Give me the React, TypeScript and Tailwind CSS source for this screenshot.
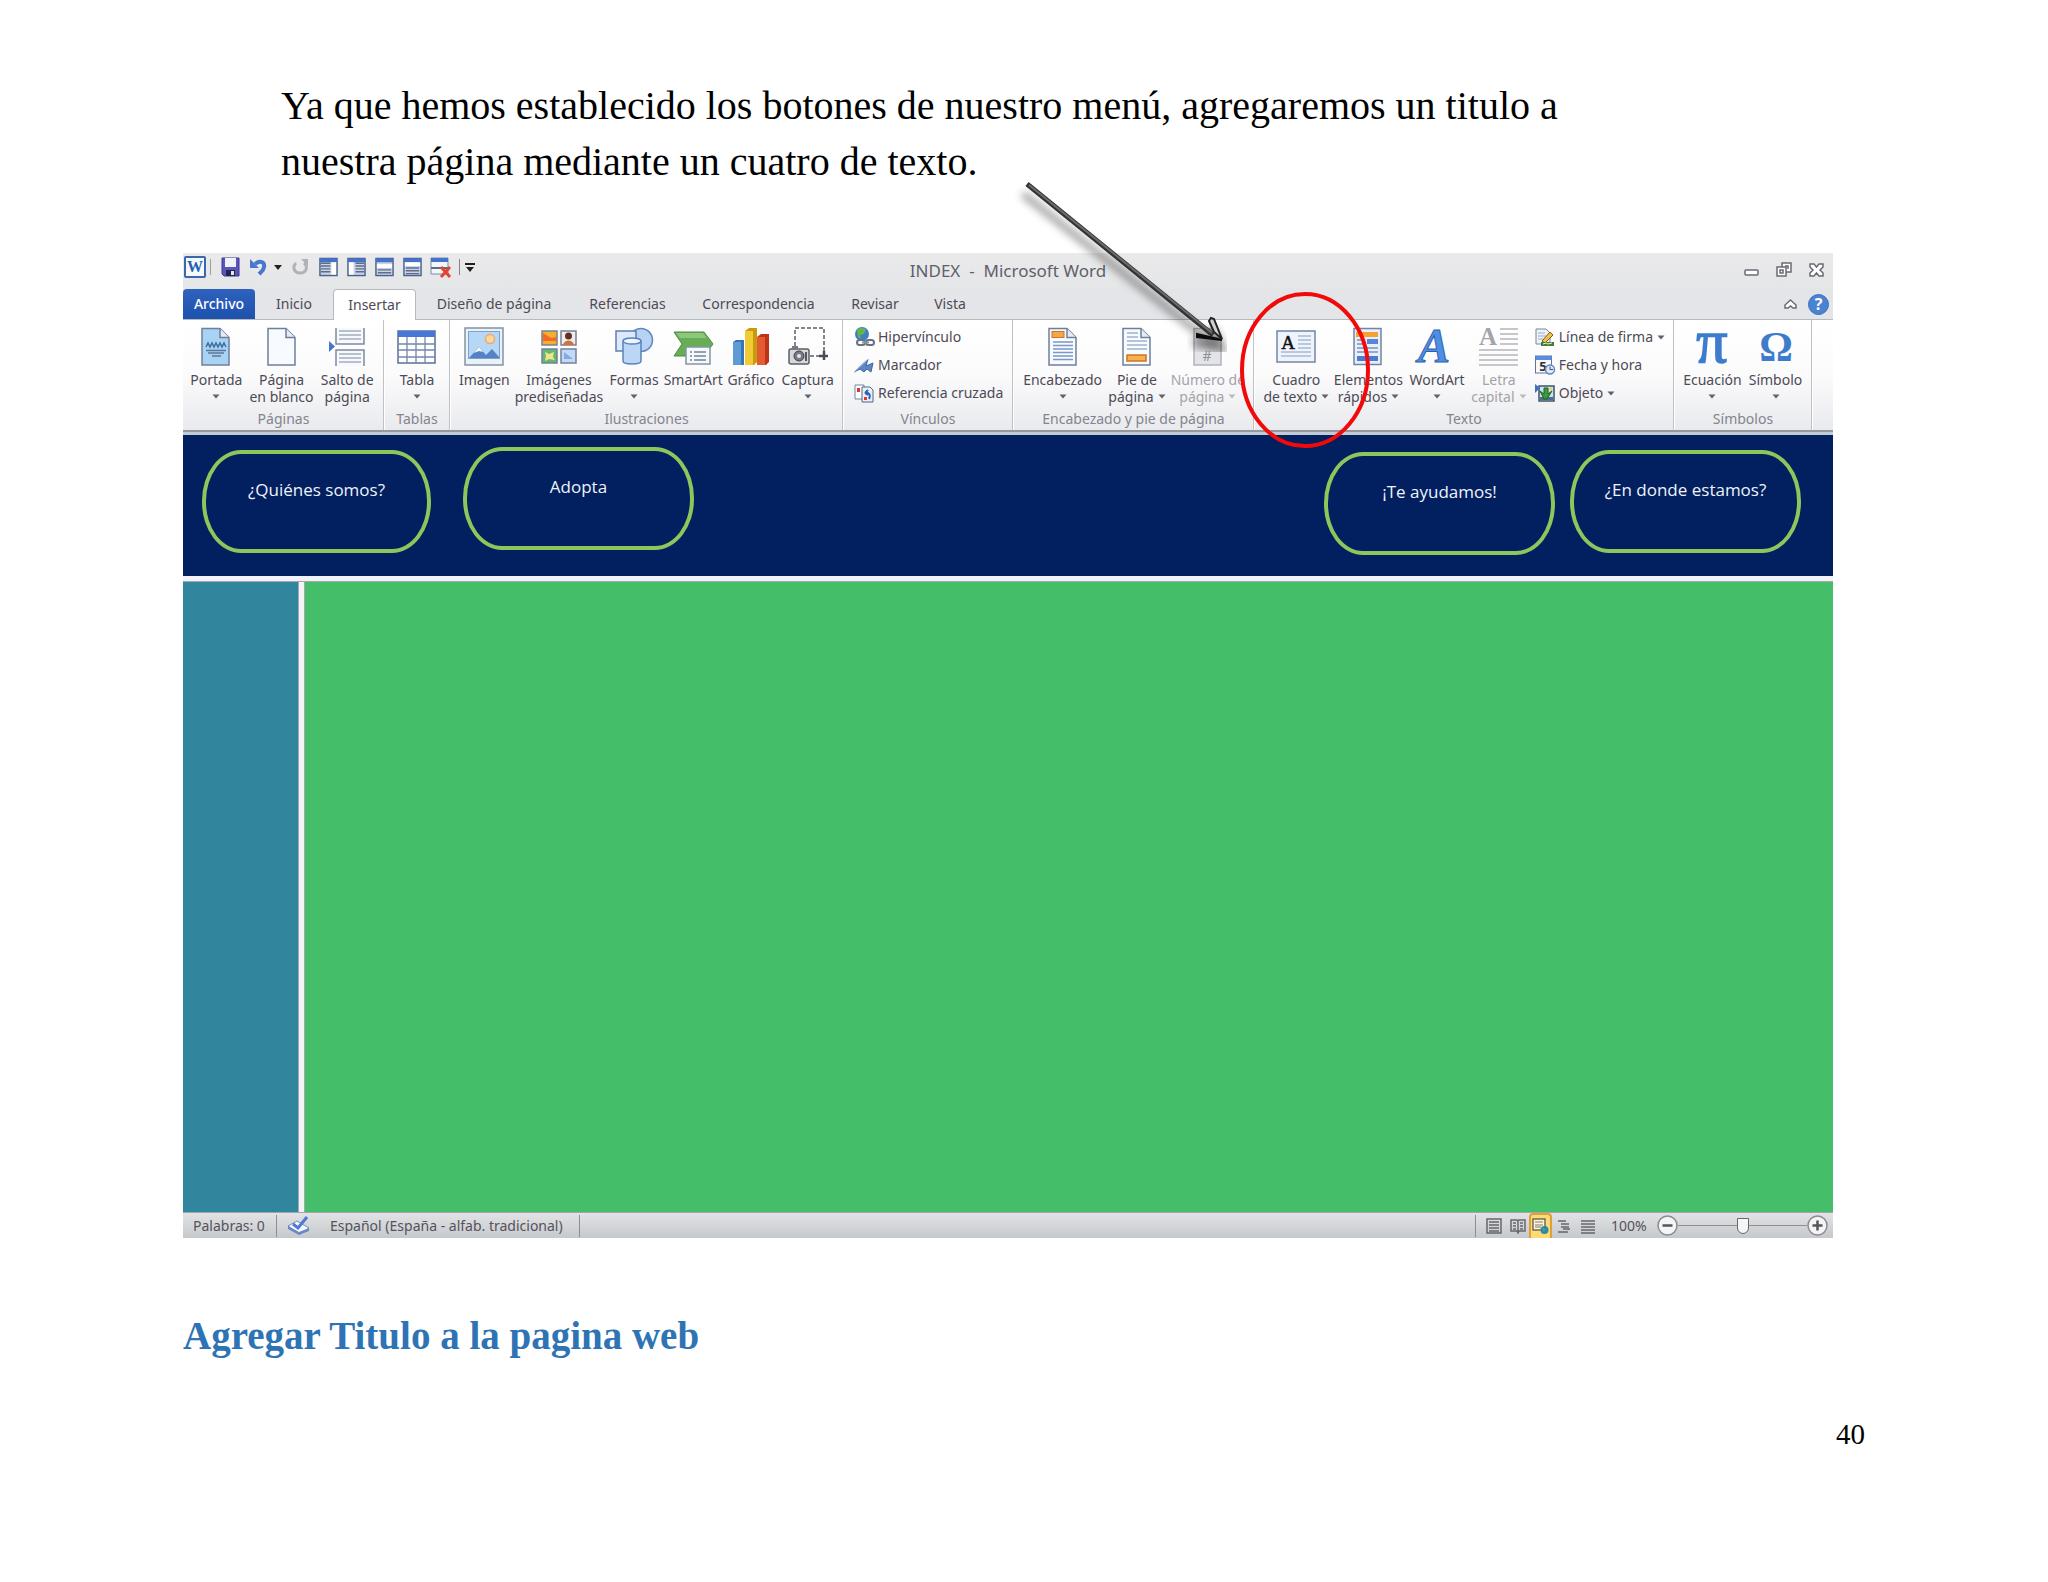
import type { ReactNode } from "react";
import { clsx } from "clsx";

const uiFont = "font-['Noto_Sans','Open_Sans',sans-serif]";
const serifFont = "font-['Liberation_Serif',serif]";

function Caret({ light }: { light?: boolean }) {
  return (
    <svg width="8" height="5" viewBox="0 0 8 5" className="inline-block shrink-0">
      <path d="M0.5 0.5h7L4 4.5z" fill={light ? "#b9bac0" : "#606168"} />
    </svg>
  );
}

/* ---------- large ribbon icons, 40x40 ---------- */

function Icon({ children }: { children: ReactNode }) {
  return (
    <svg width="40" height="40" viewBox="0 0 40 40" fill="none" className="shrink-0 overflow-visible">
      {children}
    </svg>
  );
}

function Sheet({ fill = "#f7fafe", stroke = "#6f7f9a" }: { fill?: string; stroke?: string }) {
  return (
    <>
      <path d="M6 1.5h18l9 9V38H6z" fill={fill} stroke={stroke} strokeWidth="1.5" />
      <path d="M24 1.5v9h9" fill="#e3ebf6" stroke={stroke} strokeWidth="1.5" />
    </>
  );
}

const CoverIcon = () => (
  <Icon>
    <Sheet fill="#a9d3f5" />
    <path d="M10 20l2-4 2 4 2-4 2 4 2-4 2 4 2-4 2 4 2-4 2 4" stroke="#3d6ea0" strokeWidth="1.5" />
    <path d="M10 23.500h20M12 26h16M16 29h9" stroke="#5a7896" strokeWidth="1.500" />
  </Icon>
);

const BlankIcon = () => (
  <Icon>
    <Sheet />
  </Icon>
);

const BreakIcon = () => (
  <Icon>
    <path d="M9 1v16h28V1M9 39V23h28v16" fill="#f7f9fd" stroke="#7c89a3" strokeWidth="1.500" />
    <path d="M12 4h22M12 8h22M12 12h22M12 27h22M12 31h22M12 35h22" stroke="#a3adbf" strokeWidth="1.500" />
    <path d="M2 14l6 5.500L2 25z" fill="#4775cf" />
  </Icon>
);

const TableIcon = () => (
  <Icon>
    <rect x="1" y="4" width="37" height="32" fill="#fff" stroke="#5c6f92" strokeWidth="1.500" />
    <rect x="1" y="4" width="37" height="6" fill="#4677d8" />
    <path d="M10 10v26M19 10v26M28 10v26M1 17h37M1 23h37M1 30h37" stroke="#7487ac" strokeWidth="1.300" />
  </Icon>
);

const PictureIcon = () => (
  <Icon>
    <rect x="1" y="1" width="38" height="37" fill="#e9f2f7" stroke="#8593a3" strokeWidth="1.500" />
    <rect x="4.500" y="4.500" width="31" height="27" fill="#b6d8f6" stroke="#7aa2cd" />
    <circle cx="26" cy="12" r="4.500" fill="#fdd9a0" stroke="#f0a868" strokeWidth="1.500" />
    <path d="M5 31l10-11 7 8 6-6 7 8v1z" fill="#5582c4" />
    <path d="M10 26l5-6 4 5-4-1z" fill="#f3f8ff" />
  </Icon>
);

const ClipArtIcon = () => (
  <Icon>
    <g strokeWidth="1.500" stroke="#75819a">
      <rect x="3" y="4" width="15" height="14" fill="#f5b028" />
      <rect x="22" y="4" width="15" height="14" fill="#f3ece6" />
      <rect x="3" y="22" width="15" height="14" fill="#66b96c" />
      <rect x="22" y="22" width="15" height="14" fill="#c3daf7" />
    </g>
    <path d="M4 6l8 5 5-1v4H4z" fill="#f26a2a" />
    <circle cx="29.500" cy="9" r="3.500" fill="#5b3424" />
    <path d="M24 18c1-6 10-6 11 0z" fill="#d6703a" />
    <path d="M6 25l4 2 5-2-1 5 2 3-6-1-4 2 1-5z" fill="#f0e58c" />
    <path d="M25 25l9 7H25z" fill="#86a8e8" />
  </Icon>
);

const ShapesIcon = () => (
  <Icon>
    <circle cx="27" cy="13" r="11.500" fill="#b7d2f3" stroke="#5f86bf" strokeWidth="1.500" />
    <rect x="2" y="4" width="20" height="20" fill="#dce9fa" stroke="#5f7fae" strokeWidth="1.500" />
    <path d="M9 14v20c0 4 18 4 18 0V14" fill="#bcd6f6" stroke="#5b82bd" strokeWidth="1.500" />
    <ellipse cx="18" cy="14" rx="9" ry="3" fill="#edf4fd" stroke="#5b82bd" strokeWidth="1.500" />
  </Icon>
);

const SmartArtIcon = () => (
  <Icon>
    <path d="M1 5h30l9 12-9 12H1l8-12z" fill="#67ad56" stroke="#4b8b40" />
    <path d="M3 6h27l4 5H7z" fill="#8cc77c" />
    <rect x="13" y="20" width="24" height="17" fill="#f6f9fb" stroke="#8594a0" strokeWidth="1.500" />
    <path d="M17 25h2M17 29h2M17 33h2M21 25h12M21 29h12M21 33h12" stroke="#70829a" strokeWidth="1.500" />
  </Icon>
);

const ChartIcon = () => (
  <Icon>
    <path d="M2 15l3-2h8v25H2z" fill="#3575b8" />
    <path d="M2 15h8v23H2z" fill="#5c9bd6" />
    <path d="M26 10l4-3h8v28l-3 3h-9z" fill="#bd3418" />
    <path d="M26 10h8v28h-8z" fill="#e35a35" />
    <path d="M14 4l4-3h8v34l-3 3h-9z" fill="#c99a0c" />
    <path d="M14 4h8v34h-8z" fill="#f1cb35" />
  </Icon>
);

const CaptureIcon = () => (
  <Icon>
    <path d="M7 19V1h29v27M22 29h14" stroke="#5c5f68" strokeWidth="1.500" strokeDasharray="4 2" />
    <path d="M36 24v9M31 29h9" stroke="#4a4c55" strokeWidth="2.500" />
    <rect x="1" y="22" width="20" height="15" rx="2" fill="#d5d7da" stroke="#5c5f66" strokeWidth="1.500" />
    <rect x="4" y="19" width="6" height="3" fill="#777a80" />
    <circle cx="11" cy="29" r="5" fill="#777b83" stroke="#3e4046" />
    <circle cx="11" cy="29" r="2" fill="#e2e4e8" />
    <path d="M18 25v9" stroke="#55585f" strokeWidth="2" />
  </Icon>
);

const HeaderIcon = () => (
  <Icon>
    <Sheet />
    <rect x="9" y="4.500" width="12" height="6" fill="#f3a64a" stroke="#cf7422" />
    <path d="M10 15h20M10 18.500h20M10 22h20M10 25.500h20M10 29h20M10 32.500h20" stroke="#7c98c4" strokeWidth="1.500" />
  </Icon>
);

const FooterIcon = () => (
  <Icon>
    <Sheet />
    <path d="M10 6h11M10 10h11M10 14h20M10 18h20M10 22h20" stroke="#9db1d0" strokeWidth="1.500" />
    <rect x="10" y="28" width="19" height="6" fill="#f5b14e" stroke="#cf7422" strokeWidth="1.500" />
  </Icon>
);

const PageNumberIcon = () => (
  <Icon>
    <Sheet fill="#e3e4e7" stroke="#b0b2b8" />
    <text x="19" y="34" textAnchor="middle" fontSize="14" fill="#8e9097" fontFamily="Noto Sans">
      #
    </text>
  </Icon>
);

const TextBoxIcon = () => (
  <Icon>
    <rect x="1" y="4" width="38" height="31" fill="#eff4fc" stroke="#7385a3" strokeWidth="1.500" />
    <path d="M22 9h13M22 13h13M22 17h13M22 21h13M5 25h30M5 29h30" stroke="#a9b9d4" strokeWidth="1.500" />
    <text x="12" y="22" textAnchor="middle" fontSize="19" fill="#111" stroke="#111" strokeWidth=".5" fontFamily="Liberation Serif">
      A
    </text>
  </Icon>
);

const QuickPartsIcon = () => (
  <Icon>
    <rect x="6" y="1.500" width="27" height="36" fill="#e8effa" stroke="#7385a3" strokeWidth="1.500" />
    <rect x="8" y="5" width="22" height="5" fill="#f5a233" />
    <rect x="19" y="12" width="11" height="5" fill="#5687d6" />
    <path d="M9 13h8M9 17h8M9 21h21M9 25h21" stroke="#7893c0" strokeWidth="1.500" />
    <rect x="9" y="29" width="21" height="5" fill="#4a7cd4" />
  </Icon>
);

const WordArtIcon = () => (
  <Icon>
    <text
      x="17"
      y="35"
      textAnchor="middle"
      fontSize="48"
      fontStyle="italic"
      fontWeight="bold"
      fill="#4e8fe4"
      stroke="#2f60ae"
      fontFamily="Liberation Serif"
    >
      A
    </text>
  </Icon>
);

const DropCapIcon = () => (
  <Icon>
    <text x="9" y="18" textAnchor="middle" fontSize="25" fontWeight="bold" fill="#a3a5aa" fontFamily="Liberation Serif">
      A
    </text>
    <path d="M21 2h18M21 7h18M21 12h18M21 17h18M0 23h39M0 28h39M0 33h39M0 38h39" stroke="#b3b5ba" strokeWidth="1.500" />
  </Icon>
);

const PiIcon = () => (
  <Icon>
    <text
      x="20"
      y="35"
      textAnchor="middle"
      fontSize="62"
      fill="#3d7ccd"
      stroke="#3d7ccd"
      strokeWidth="1.5"
      fontFamily="Liberation Serif"
    >
      π
    </text>
  </Icon>
);

const OmegaIcon = () => (
  <Icon>
    <text x="20" y="34" textAnchor="middle" fontSize="42" fontWeight="bold" fill="#3d7ccd" fontFamily="Liberation Serif">
      Ω
    </text>
  </Icon>
);

/* ---------- small ribbon icons, 20x20 ---------- */

function SmallIcon({ children }: { children: ReactNode }) {
  return (
    <svg width="20" height="20" viewBox="0 0 20 20" fill="none" className="shrink-0 overflow-visible">
      {children}
    </svg>
  );
}

const LinkIcon = () => (
  <SmallIcon>
    <circle cx="8" cy="7" r="7" fill="#3f7dc4" />
    <path d="M3 3c3-3 6-2 9-1l-2 5-4 1 1 4-3-2z" fill="#63b54e" />
    <rect x="3" y="13" width="8" height="5" rx="2.500" stroke="#66727f" strokeWidth="2" />
    <rect x="12" y="13" width="8" height="5" rx="2.500" stroke="#66727f" strokeWidth="2" />
    <path d="M8 15.500h7" stroke="#8b96a2" strokeWidth="2" />
  </SmallIcon>
);

const BookmarkIcon = () => (
  <SmallIcon>
    <path d="M0 17L14 4l-2 7 7-3-2 9-4-3-3 3-4-3z" fill="#5b86c8" stroke="#41659f" />
    <path d="M0 17L14 4" stroke="#c6d8f2" />
  </SmallIcon>
);

const CrossRefIcon = () => (
  <SmallIcon>
    <path d="M1 2h9v14H1z" fill="#fff" stroke="#7485a1" />
    <path d="M8 4h8l3 3v12H8z" fill="#e9f0fa" stroke="#52658a" />
    <path d="M3 5h3v4H3z" fill="#d93b2a" />
    <path d="M15 16c2-4 0-7-4-6m0 0l3-3m-3 3l3 2" stroke="#2d63b8" strokeWidth="2" />
    <path d="M10 14h3v3h-3z" fill="#d93b2a" />
  </SmallIcon>
);

const SignatureIcon = () => (
  <SmallIcon>
    <path d="M1 2h10l4 4v11H1z" fill="#eef3fa" stroke="#7485a1" />
    <path d="M3 6h7M3 9h8M3 12h5" stroke="#9aacca" />
    <path d="M7 14l8-9 3 3-8 8z" fill="#f0c14a" stroke="#7c5d1a" />
    <path d="M6 15h13v4H6z" fill="#4b7a34" />
    <path d="M8 17l3-1 2 1 4-1" stroke="#e9f3d0" />
  </SmallIcon>
);

const DateIcon = () => (
  <SmallIcon>
    <rect x="0.500" y="1" width="16" height="17" fill="#f7f9fc" stroke="#5d74a0" />
    <path d="M0.500 1h16v4h-16z" fill="#5b8be0" />
    <text x="8" y="16" textAnchor="middle" fontSize="13" fontWeight="bold" fill="#333" fontFamily="Noto Sans">
      5
    </text>
    <circle cx="15" cy="14.500" r="4.500" fill="#dce8f8" stroke="#6487bd" strokeWidth="1.500" />
    <path d="M15 11.500v3h3" stroke="#456" />
  </SmallIcon>
);

const ObjectIcon = () => (
  <SmallIcon>
    <rect x="4" y="3" width="15" height="15" fill="#cfe2ee" stroke="#3d556d" strokeWidth="1.500" />
    <path d="M5 14h13v3H5z" fill="#4a6f92" />
    <path d="M5 8l4 3V5h4v6l4-3-5 8H9z" fill="#3f9a3a" stroke="#1f5f22" />
    <circle cx="16" cy="6" r="1.500" fill="#f3d44f" />
    <path d="M0 1l5 4-5 5z" fill="#3e6fc0" />
  </SmallIcon>
);

/* ---------- ribbon ---------- */

type BigButtonProps = {
  icon: ReactNode;
  label: string;
  second?: string;
  caret?: boolean;
  disabled?: boolean;
};

function BigButton({ icon, label, second, caret, disabled }: BigButtonProps) {
  return (
    <button
      type="button"
      disabled={disabled}
      className={clsx(
        "flex min-w-0 flex-col items-center whitespace-nowrap text-sm leading-[17px]",
        disabled ? "text-[#a2a3a9]" : "text-[#4d4a55]"
      )}
    >
      {icon}
      <span className="mt-1">{label}</span>
      <span className="flex h-[17px] items-center gap-1">
        {second}
        {caret && <Caret light={disabled} />}
      </span>
    </button>
  );
}

function SmallButton({ icon, label, caret }: { icon: ReactNode; label: string; caret?: boolean }) {
  return (
    <button type="button" className="flex h-7 items-center gap-1 whitespace-nowrap text-sm text-[#4d4a55]">
      {icon}
      {label}
      {caret && <Caret />}
    </button>
  );
}

function Group({ title, cols, children }: { title: string; cols: string; children: ReactNode }) {
  return (
    <section
      aria-label={title}
      className="flex min-w-0 flex-col border-r border-[#bfc1c6] shadow-[1px_0_0_#fff]"
    >
      <div className={clsx("grid h-[86px] pt-[7px] pl-px", cols)}>{children}</div>
      <h3 className="mt-[3px] mb-px pl-px whitespace-nowrap text-center text-sm leading-5 text-[#83848d]">{title}</h3>
    </section>
  );
}

function Ribbon() {
  return (
    <div className="grid grid-cols-[201fr_66fr_393fr_170fr_241fr_420fr_138fr_21fr] border-t border-[#b6b9be] bg-linear-to-b from-white via-[#fbfbfc] to-[#e9eaee]">
      <Group title="Páginas" cols="grid-cols-[65fr_66fr_66fr_3fr]">
        <BigButton icon={<CoverIcon />} label="Portada" caret />
        <BigButton icon={<BlankIcon />} label="Página" second="en blanco" />
        <BigButton icon={<BreakIcon />} label="Salto de" second="página" />
      </Group>
      <Group title="Tablas" cols="grid-cols-1">
        <BigButton icon={<TableIcon />} label="Tabla" caret />
      </Group>
      <Group title="Ilustraciones" cols="grid-cols-[67fr_83fr_68fr_51fr_65fr_49fr_10fr]">
        <BigButton icon={<PictureIcon />} label="Imagen" />
        <BigButton icon={<ClipArtIcon />} label="Imágenes" second="prediseñadas" />
        <BigButton icon={<ShapesIcon />} label="Formas" caret />
        <BigButton icon={<SmartArtIcon />} label="SmartArt" />
        <BigButton icon={<ChartIcon />} label="Gráfico" />
        <BigButton icon={<CaptureIcon />} label="Captura" caret />
      </Group>
      <Group title="Vínculos" cols="grid-cols-1">
        <div className="-mt-1 flex flex-col pl-[10px]">
          <SmallButton icon={<LinkIcon />} label="Hipervínculo" />
          <SmallButton icon={<BookmarkIcon />} label="Marcador" />
          <SmallButton icon={<CrossRefIcon />} label="Referencia cruzada" />
        </div>
      </Group>
      <Group title="Encabezado y pie de página" cols="grid-cols-[98fr_52fr_91fr]">
        <BigButton icon={<HeaderIcon />} label="Encabezado" caret />
        <BigButton icon={<FooterIcon />} label="Pie de" second="página" caret />
        <BigButton icon={<PageNumberIcon />} label="Número de" second="página" caret disabled />
      </Group>
      <Group title="Texto" cols="grid-cols-[83fr_62fr_76fr_48fr_151fr]">
        <BigButton icon={<TextBoxIcon />} label="Cuadro" second="de texto" caret />
        <BigButton icon={<QuickPartsIcon />} label="Elementos" second="rápidos" caret />
        <BigButton icon={<WordArtIcon />} label="WordArt" caret />
        <BigButton icon={<DropCapIcon />} label="Letra" second="capital" caret disabled />
        <div className="-mt-1 flex min-w-0 flex-col pl-3">
          <SmallButton icon={<SignatureIcon />} label="Línea de firma" caret />
          <SmallButton icon={<DateIcon />} label="Fecha y hora" />
          <SmallButton icon={<ObjectIcon />} label="Objeto" caret />
        </div>
      </Group>
      <Group title="Símbolos" cols="grid-cols-[76fr_52fr_10fr]">
        <BigButton icon={<PiIcon />} label="Ecuación" caret />
        <BigButton icon={<OmegaIcon />} label="Símbolo" caret />
      </Group>
    </div>
  );
}

/* ---------- title bar and tabs ---------- */

const layoutIcons = [
  "M2 6h10M2 9h10M2 12h10M2 15h10",
  "M9 6h9M9 9h9M9 12h9M9 15h9",
  "M3 13h14M3 16h14",
  "M3 11h14M3 14h14M3 17h14",
];

function LayoutIcon({ index }: { index: number }) {
  return (
    <svg width="19" height="20" viewBox="0 0 20 20" fill="none">
      <rect x="1" y="1" width="18" height="18" fill="#c9d3e4" stroke="#4a6190" strokeWidth="1.500" />
      <path d="M1 1h18v4H1z" fill="#4573cc" />
      {index === 0 && <path d="M13 5h5v13h-5z" fill="#fff" />}
      {index === 1 && <path d="M2 5h5v13H2z" fill="#fff" />}
      {index === 2 && <path d="M2 7h16v4H2z" fill="#fff" />}
      {index === 3 && <path d="M2 5h16v4H2z" fill="#fff" />}
      <path d={layoutIcons[index]} stroke="#5e6c86" strokeWidth="1.500" />
    </svg>
  );
}

function QuickAccess() {
  return (
    <div className="flex items-center">
      <svg width="22" height="22" viewBox="0 0 22 22" className="ml-px">
        <rect x="1" y="1" width="20" height="20" rx="1" fill="#f5f9fe" stroke="#3a68ae" strokeWidth="2" />
        <text x="11" y="16" textAnchor="middle" fontSize="16" fontWeight="bold" fill="#2460b2" fontFamily="Liberation Serif">
          W
        </text>
      </svg>
      <span className="ml-1 h-4 w-px bg-[#9b9ca2]" />
      <button type="button" aria-label="Guardar" className="ml-[10px]">
        <svg width="19" height="20" viewBox="0 0 19 20">
          <path d="M1 1h17v18H3l-2-2z" fill="#5a55b8" stroke="#3a3890" />
          <path d="M4 1h11v9H4z" fill="#eef2fb" />
          <path d="M5 13h9v6H5z" fill="#24244f" />
          <path d="M10 14h3v4h-3z" fill="#e8e8f2" />
        </svg>
      </button>
      <button type="button" aria-label="Deshacer" className="ml-[10px]">
        <svg width="17" height="18" viewBox="0 0 17 18" fill="none">
          <path d="M5 6c5-4 10-2 9 3-.5 4-3 5-5 7" stroke="#4877cf" strokeWidth="4" />
          <path d="M0 1v9h9z" fill="#4877cf" />
        </svg>
      </button>
      <span className="ml-[7px] flex">
        <svg width="8" height="5" viewBox="0 0 8 5">
          <path d="M0 0h8L4 5z" fill="#222" />
        </svg>
      </span>
      <button type="button" aria-label="Rehacer" className="ml-[10px]">
        <svg width="17" height="18" viewBox="0 0 17 18" fill="none">
          <path d="M4 5c-4 4-2 10 4 10 7 0 8-7 4-10" stroke="#b1b2b6" strokeWidth="3" />
          <path d="M9 1h7v7z" fill="#b1b2b6" />
        </svg>
      </button>
      <div className="ml-[10px] flex gap-[9px]">
        {layoutIcons.map((d, i) => (
          <button key={d} type="button" aria-label={`Diseño ${i + 1}`}>
            <LayoutIcon index={i} />
          </button>
        ))}
      </div>
      <button type="button" aria-label="Quitar" className="ml-2">
        <svg width="22" height="21" viewBox="0 0 22 21" fill="none">
          <path d="M1 1h17v16H1z" fill="#f2f5fa" stroke="#7b8cab" />
          <path d="M1 1h17v4H1z" fill="#4573cc" />
          <path d="M1 11h17" stroke="#5e6c86" strokeWidth="2" />
          <path d="M11 10l9 10M20 10l-9 10" stroke="#e2452f" strokeWidth="3" />
        </svg>
      </button>
      <span className="ml-[7px] h-4 w-px bg-[#85868c]" />
      <svg width="10" height="9" viewBox="0 0 10 9" className="ml-[5px]">
        <path d="M0 0h10v2H0zM1 4h8L5 9z" fill="#222" />
      </svg>
    </div>
  );
}

function TitleBar() {
  return (
    <header className="grid h-9 grid-cols-[1fr_auto_1fr] bg-linear-to-b from-[#eaeaeb] to-[#e5e6e8]">
      <div className="flex items-start pt-[3px]">
        <QuickAccess />
      </div>
      <h2 className="whitespace-pre pt-[6px] text-[17px] leading-6 text-[#5f5f69]">INDEX  -  Microsoft Word</h2>
      <div className="flex items-center justify-end gap-[17px] pr-[9px] pb-[3px]">
        <button type="button" aria-label="Minimizar">
          <svg width="15" height="16" viewBox="0 0 15 16" fill="none">
            <rect x="1" y="8" width="13" height="5" rx="1" fill="#fff" stroke="#6a6b72" strokeWidth="1.500" />
          </svg>
        </button>
        <button type="button" aria-label="Restaurar">
          <svg width="16" height="16" viewBox="0 0 16 16" fill="none" stroke="#6a6b72" strokeWidth="1.500">
            <rect x="6" y="1" width="9" height="9" fill="#fff" />
            <rect x="1" y="5" width="9" height="9" fill="#fff" />
            <path d="M4 8h3v3H4zM9 4h3v3" />
          </svg>
        </button>
        <button type="button" aria-label="Cerrar">
          <svg width="15" height="14" viewBox="0 0 15 14">
            <path
              d="M1 1h4l2.500 3L10 1h4v3l-3 3 3 3v3h-4l-2.500-3L5 13H1v-3l3-3-3-3z"
              fill="#fff"
              stroke="#6a6b72"
              strokeWidth="1.500"
            />
          </svg>
        </button>
      </div>
    </header>
  );
}

const tabs = [
  { label: "Inicio", width: "w-[78px]" },
  { label: "Insertar", width: "w-[83px]", active: true },
  { label: "Diseño de página", width: "w-[156px]" },
  { label: "Referencias", width: "w-[111px]" },
  { label: "Correspondencia", width: "w-[151px]" },
  { label: "Revisar", width: "w-[82px]" },
  { label: "Vista", width: "w-[68px]" },
];

function Tabs() {
  return (
    <div className="flex h-[30px] items-stretch bg-[#e4e5e8] text-sm text-[#4d4a55]">
      <button type="button" className="w-[72px] rounded-t bg-linear-to-b from-[#2e62bd] to-[#1d51ae] font-medium text-white">
        Archivo
      </button>
      {tabs.map((tab) => (
        <button
          key={tab.label}
          type="button"
          className={clsx(
            "whitespace-nowrap",
            tab.width,
            tab.active && "relative -mb-px rounded-t border border-b-0 border-[#b6b9be] bg-white"
          )}
        >
          {tab.label}
        </button>
      ))}
      <div className="ml-auto flex items-center gap-[11px] pr-1">
        <button type="button" aria-label="Minimizar la cinta">
          <svg width="13" height="11" viewBox="0 0 13 11">
            <path d="M6.500 1L12 6v3H9L6.500 7 4 9H1V6z" fill="#fff" stroke="#6a6b72" strokeWidth="1.500" />
          </svg>
        </button>
        <button
          type="button"
          aria-label="Ayuda"
          className="flex size-[21px] items-center justify-center rounded-full border border-[#3a6fba] bg-[#4a83d2] text-base font-bold text-white"
        >
          ?
        </button>
      </div>
    </div>
  );
}

/* ---------- page under edition ---------- */

function Pill({ label, className }: { label: string; className: string }) {
  return (
    <a
      href="#"
      className={clsx(
        "h-[103px] rounded-[39px/51px] border-4 border-[#8cc75c] pt-6 text-center text-[17px] leading-6 font-medium text-[#eef3fb]",
        className
      )}
    >
      {label}
    </a>
  );
}

function WebPage() {
  return (
    <div>
      <nav className="flex h-[141px] items-start bg-[#021f5f] pr-8 pl-[19px] pt-3 font-['Open_Sans','Noto_Sans',sans-serif]">
        <Pill label="¿Quiénes somos?" className="mt-[3px] w-[229px]" />
        <Pill label="Adopta" className="ml-8 w-[231px]" />
        <Pill label="¡Te ayudamos!" className="mt-[5px] ml-auto w-[231px]" />
        <Pill label="¿En donde estamos?" className="mt-[3px] ml-[15px] w-[231px]" />
      </nav>
      <div className="h-[6px] border-b border-[#a4a8ac] bg-[#f1f3fa]" />
      <div className="flex h-[630px]">
        <div className="w-[115px] bg-[#31859c]" />
        <div className="w-[7px] border-x border-[#a4a8ac] bg-[#f4f4f6]" />
        <div className="flex-1 bg-[#45be69]" />
      </div>
    </div>
  );
}

/* ---------- status bar ---------- */

function ViewLines({ d }: { d: string }) {
  return (
    <svg width="16" height="16" viewBox="0 0 16 16" fill="none" stroke="#66676e" strokeWidth="1.500">
      <path d={d} />
    </svg>
  );
}

function RoundButton({ label, d }: { label: string; d: string }) {
  return (
    <button type="button" aria-label={label}>
      <svg width="21" height="21" viewBox="0 0 21 21">
        <circle cx="10.500" cy="10.500" r="9.500" fill="#f4f4f5" stroke="#8a8b91" strokeWidth="1.500" />
        <path d={d} stroke="#55565c" strokeWidth="2.500" />
      </svg>
    </button>
  );
}

function StatusBar() {
  return (
    <footer className="flex h-[26px] items-center border-t border-[#a3a5aa] bg-linear-to-b from-[#e1e3e5] to-[#c6c9cc] text-sm whitespace-nowrap text-[#55525c]">
      <div className="w-[93px] pl-[10px]">Palabras: 0</div>
      <span className="h-[22px] w-px bg-[#8c8e93]" />
      <svg width="23" height="20" viewBox="0 0 23 20" className="ml-[10px]">
        <path d="M1 10l9-5 12 7-9 6z" fill="#f5f8fc" stroke="#7c8db0" />
        <path d="M1 10v3l11 6v-3zM22 12v3l-10 4v-3z" fill="#6a87c6" />
        <path d="M6 8l5 4L20 1" fill="none" stroke="#4f78d4" strokeWidth="3" />
      </svg>
      <div className="ml-5 w-[249px]">Español (España - alfab. tradicional)</div>
      <span className="h-[22px] w-px bg-[#8c8e93]" />
      <div className="ml-auto flex h-full items-center">
        <span className="h-[22px] w-px bg-[#8c8e93]" />
        <button type="button" aria-label="Diseño de impresión" className="ml-[10px]">
          <ViewLines d="M1 1h14v14H1zM3 4h10M3 7h10M3 10h10M3 13h10" />
        </button>
        <button type="button" aria-label="Lectura" className="ml-2">
          <ViewLines d="M1 2h6l1 1 1-1h6v11H9l-1 2-1-2H1zM8 3v12M3 5h3M3 8h3M3 11h3M10 5h3M10 8h3M10 11h3" />
        </button>
        <button
          type="button"
          aria-label="Diseño web"
          className="ml-[3px] flex h-full w-[23px] items-center justify-center rounded-t border-2 border-b-0 border-[#dda03a] bg-[#fbdc74]"
        >
          <svg width="17" height="17" viewBox="0 0 17 17">
            <path d="M1 1h12v11H1z" fill="#fdf6dc" stroke="#73695a" strokeWidth="1.500" />
            <path d="M3 4h8M3 7h8M3 9h6" stroke="#857b68" />
            <circle cx="12.500" cy="12" r="4" fill="#2f88a5" />
            <path d="M10 10l3 1-1 3z" fill="#58ad62" />
          </svg>
        </button>
        <button type="button" aria-label="Esquema" className="ml-1">
          <ViewLines d="M2 3h8M5 6h8M5 9h8M7 11h7M2 14h10" />
        </button>
        <button type="button" aria-label="Borrador" className="ml-2">
          <ViewLines d="M1 3h14M1 6h14M1 9h14M1 12h14M1 15h14" />
        </button>
        <span className="ml-[15px] w-[46px]">100%</span>
        <RoundButton label="Alejar" d="M5.500 10.500h10" />
        <input
          type="range"
          aria-label="Zoom"
          defaultValue={50}
          className="h-5 w-[129px] appearance-none bg-[linear-gradient(#8d8f94,#8d8f94)] bg-[length:100%_1px] bg-center bg-no-repeat [&::-webkit-slider-thumb]:h-4 [&::-webkit-slider-thumb]:w-3 [&::-webkit-slider-thumb]:appearance-none [&::-webkit-slider-thumb]:rounded-b-[6px] [&::-webkit-slider-thumb]:border [&::-webkit-slider-thumb]:border-[#66676e] [&::-webkit-slider-thumb]:bg-[#f6f6f7]"
        />
        <RoundButton label="Acercar" d="M5.500 10.500h10M10.500 5.500v10" />
        <span className="w-[5px]" />
      </div>
    </footer>
  );
}

/* ---------- annotations drawn over the capture ---------- */

function PointerArrow() {
  return (
    <svg
      width="230"
      height="190"
      viewBox="0 0 230 190"
      fill="none"
      className="pointer-events-none absolute -top-[79px] left-[826px]"
    >
      <defs>
        <filter id="soft" x="-20%" y="-20%" width="140%" height="140%">
          <feGaussianBlur stdDeviation="4" />
        </filter>
      </defs>
      <path d="M14 20L204 170" stroke="#000" strokeOpacity=".45" strokeWidth="6" filter="url(#soft)" />
      <path d="M184 168l28 6-10-20" stroke="#000" strokeOpacity=".45" strokeWidth="8" filter="url(#soft)" />
      <path d="M18 10L204 161" stroke="#333" strokeWidth="5" />
      <path d="M20 11L203 159" stroke="#6c6c6c" strokeWidth="2" />
      <path d="M188 160l25 6-25-3z" fill="#0c0c0c" stroke="#0c0c0c" strokeWidth="2" />
      <path d="M200 147l2-3 3 1 8 20-8-7z" fill="#d0d0d0" stroke="#222" strokeWidth="2" />
    </svg>
  );
}

function RedCircle() {
  return (
    <svg
      width="132"
      height="158"
      viewBox="0 0 132 158"
      fill="none"
      className="pointer-events-none absolute top-[38px] left-[1056px]"
    >
      <ellipse cx="66" cy="79" rx="63" ry="76" stroke="#f20a0a" strokeWidth="4" />
    </svg>
  );
}

function App() {
  return (
    <main className={clsx("min-h-screen bg-white pb-32 text-black", serifFont)}>
      <p className="pt-[78px] pl-[281px] text-[40px] leading-[56px]">
        Ya que hemos establecido los botones de nuestro menú, agregaremos un titulo a
        <br />
        nuestra página mediante un cuatro de texto.
      </p>
      <figure className={clsx("relative mt-[63px] mr-[215px] ml-[183px]", uiFont)}>
        <TitleBar />
        <Tabs />
        <Ribbon />
        <div className="h-[5px] border-t-2 border-[#97989e] bg-[#c3ccd6]" />
        <WebPage />
        <StatusBar />
        <PointerArrow />
        <RedCircle />
      </figure>
      <h1 className="mt-[72px] ml-[183px] text-[39px] leading-[52px] font-bold text-[#2e74b5]">
        Agregar Titulo a la pagina web
      </h1>
      <p className="mt-[52px] mr-[183px] text-right text-[29px] leading-10">40</p>
    </main>
  );
}

export default App;
